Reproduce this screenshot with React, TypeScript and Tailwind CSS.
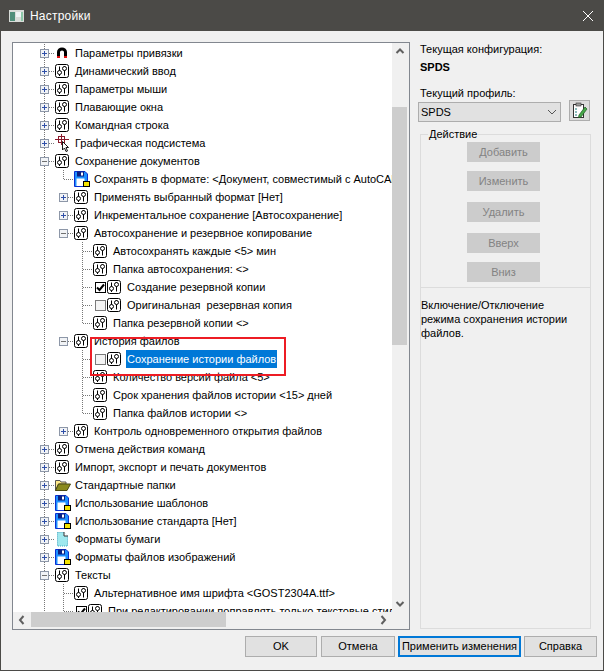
import React from "react";

type Cell = "v" | "n" | "t" | "e" | "p" | "m" | "q" | "r";
type Icon = "set" | "mag" | "cross" | "flop" | "fold" | "doc";
type Row = { c: Cell[]; i: Icon; t: string; k?: 0 | 1; s?: boolean };

const rows: Row[] = [
  { c: ["p"], i: "mag", t: "Параметры привязки" },
  { c: ["p"], i: "set", t: "Динамический ввод" },
  { c: ["p"], i: "set", t: "Параметры мыши" },
  { c: ["p"], i: "set", t: "Плавающие окна" },
  { c: ["p"], i: "set", t: "Командная строка" },
  { c: ["p"], i: "cross", t: "Графическая подсистема" },
  { c: ["m"], i: "set", t: "Сохранение документов" },
  { c: ["v", "e"], i: "flop", t: "Сохранять в формате: <Документ, совместимый с AutoCAD 2013>" },
  { c: ["v", "q"], i: "set", t: "Применять выбранный формат [Нет]" },
  { c: ["v", "q"], i: "set", t: "Инкрементальное сохранение [Автосохранение]" },
  { c: ["v", "r"], i: "set", t: "Автосохранение и резервное копирование" },
  { c: ["v", "n", "t"], i: "set", t: "Автосохранять каждые <5> мин" },
  { c: ["v", "n", "t"], i: "set", t: "Папка автосохранения: <>" },
  { c: ["v", "n", "t"], i: "set", t: "Создание резервной копии", k: 1 },
  { c: ["v", "n", "t"], i: "set", t: "Оригинальная  резервная копия", k: 0 },
  { c: ["v", "n", "e"], i: "set", t: "Папка резервной копии <>" },
  { c: ["v", "r"], i: "set", t: "История файлов" },
  { c: ["v", "n", "t"], i: "set", t: "Сохранение истории файлов", k: 0, s: true },
  { c: ["v", "n", "t"], i: "set", t: "Количество версий файла <5>" },
  { c: ["v", "n", "t"], i: "set", t: "Срок хранения файлов истории <15> дней" },
  { c: ["v", "n", "e"], i: "set", t: "Папка файлов истории <>" },
  { c: ["v", "q"], i: "set", t: "Контроль одновременного открытия файлов" },
  { c: ["p"], i: "set", t: "Отмена действия команд" },
  { c: ["p"], i: "set", t: "Импорт, экспорт и печать документов" },
  { c: ["p"], i: "fold", t: "Стандартные папки" },
  { c: ["p"], i: "flop", t: "Использование шаблонов" },
  { c: ["p"], i: "flop", t: "Использование стандарта [Нет]" },
  { c: ["p"], i: "doc", t: "Форматы бумаги" },
  { c: ["p"], i: "flop", t: "Форматы файлов изображений" },
  { c: ["m"], i: "set", t: "Тексты" },
  { c: ["v", "t"], i: "set", t: "Альтернативное имя шрифта <GOST2304A.ttf>" },
  { c: ["v", "t"], i: "set", t: "При редактировании поправлять только текстовые стили", k: 1 },
];

const dot = { stroke: "#777", strokeWidth: 1, strokeDasharray: "1 1", fill: "none" };

function TreeCell({ c }: { c: Cell }) {
  const hasV = c === "v" || c === "p" || c === "m" || c === "t";
  const hasH = c === "t" || c === "e";
  const box = c === "p" || c === "m" || c === "q" || c === "r";
  const plus = c === "p" || c === "q";
  return (
    <svg width="19" height="18" viewBox="0 0 19 18" className="shrink-0 block">
      {hasV && <path d="M9.5 0V18" {...dot} />}
      {c === "e" && <path d="M9.5 0V9.5" {...dot} />}
      {hasH && <path d="M10 9.5H20" {...dot} />}
      {box && (
        <g>
          <path d="M14 9.5H20" {...dot} />
          <rect x="5.5" y="5.5" width="8" height="8" fill="#f1f3f6" stroke="#8d97a8" />
          <path d={plus ? "M7 9.5H12M9.5 7V12" : "M7 9.5H12"} stroke={plus ? "#2f4fa8" : "#707070"} strokeWidth="1" fill="none" />
        </g>
      )}
    </svg>
  );
}

function RowIcon({ i }: { i: Icon }) {
  if (i === "set")
    return (
      <svg width="14" height="14" viewBox="0 0 14 14" className="shrink-0">
        <rect x="0.5" y="0.5" width="13" height="13" rx="2" fill="#fff" stroke="#000" />
        <path d="M4.5 2.5V12M9.5 2V11.5" stroke="#000" fill="none" />
        <circle cx="4.5" cy="8.5" r="2" fill="#fff" stroke="#000" />
        <circle cx="9.5" cy="4.5" r="2" fill="#fff" stroke="#000" />
      </svg>
    );
  if (i === "mag")
    return (
      <svg width="14" height="14" viewBox="0 0 14 14" className="shrink-0">
        <path d="M2 11V6a5 4.500 0 0 1 10 0v5h-3V6a2 1.500 0 0 0-4 0v5z" fill="#000" />
        <rect x="2" y="10" width="3" height="2" fill="#e01010" />
        <rect x="9" y="10" width="3" height="2" fill="#e01010" />
      </svg>
    );
  if (i === "cross")
    return (
      <svg width="16" height="18" viewBox="0 0 16 18" className="shrink-0 mr-[-2px]">
        <path d="M0 5.500H14M6.500 0V11" stroke="#8b1a2b" fill="none" />
        <rect x="3.500" y="2.500" width="6" height="6" fill="none" stroke="#8b1a2b" />
        <path d="M7.500 7.500V16L9.500 14L11 17.500L12.500 17L11 13.500H13.500Z" fill="#fff" stroke="#000" strokeWidth="0.900" />
      </svg>
    );
  if (i === "flop")
    return (
      <svg width="16" height="16" viewBox="0 0 16 16" className="shrink-0 mr-[-2px]">
        <path d="M0.500 0.500H11L13.500 3V15.500H0.500Z" fill="#1e90ff" stroke="#0a2fd0" />
        <rect x="3" y="0.500" width="7" height="5" fill="#0a1f80" />
        <rect x="7" y="1.500" width="2" height="3" fill="#fff" />
        <rect x="2.500" y="7.500" width="8" height="7.500" fill="#fff" />
        <rect x="9.500" y="10.500" width="6" height="5" fill="#f5e400" stroke="#000" />
      </svg>
    );
  if (i === "fold")
    return (
      <svg width="16" height="14" viewBox="0 0 16 14" className="shrink-0 mr-[-2px]">
        <path d="M0.500 12.500V2.500H5L6 4H11V6H3.500L0.500 12.500Z" fill="#ffe98a" stroke="#555" />
        <path d="M0.500 12.500L3.500 6H15.500L12 12.500Z" fill="#8a8a1e" stroke="#4a4a10" />
      </svg>
    );
  return (
    <svg width="14" height="16" viewBox="0 0 14 16" className="shrink-0">
      <path d="M2.500 1.500H9L12.500 5V15H2.500Z" fill="#9ee8ee" stroke="#3aa6c0" strokeDasharray="1 1" />
      <path d="M9 1V5H13" fill="#fff" stroke="#333" />
    </svg>
  );
}

function Check({ on }: { on: boolean }) {
  return (
    <span className={"ml-[3px] mr-px w-[11px] h-[11px] shrink-0 flex items-center justify-center border " + (on ? "border-black bg-white" : "border-[#7a7a7a] bg-[#f4f4f4]")}>
      {on && (
        <svg width="9" height="9" viewBox="0 0 9 9">
          <path d="M1 4.500L3.500 7L8 1.500" stroke="#000" strokeWidth="2" fill="none" />
        </svg>
      )}
    </span>
  );
}

function TreeRow({ r }: { r: Row }) {
  return (
    <div className="flex items-center h-[18px] shrink-0">
      {r.c.map((c, n) => (
        <TreeCell key={n} c={c} />
      ))}
      {r.k !== undefined ? <Check on={r.k === 1} /> : <span className="w-px shrink-0" />}
      <RowIcon i={r.i} />
      <span className={"ml-[5px] pl-px pr-px h-[18px] leading-[18px] whitespace-pre shrink-0 " + (r.s ? "bg-[#0078d7] text-white" : "text-black")}>
        {r.t}
      </span>
    </div>
  );
}

function Arrow({ d }: { d: "u" | "d" | "l" | "r" }) {
  const p = { u: "M1.500 6L5 2.500L8.500 6", d: "M1.500 3L5 6.500L8.500 3", l: "M6.500 1L3 5L6.500 9", r: "M3.500 1L7 5L3.500 9" }[d];
  return (
    <svg width="10" height="10" viewBox="0 0 10 10" className="block">
      <path d={p} stroke="#606060" strokeWidth="2" fill="none" />
    </svg>
  );
}

function Disabled({ t, className }: { t: string; className: string }) {
  return (
    <div className={"w-[73px] h-[20px] ml-[46px] bg-[#cccccc] text-[#838383] flex items-center justify-center " + className}>{t}</div>
  );
}

function Btn({ t, w, primary }: { t: string; w: string; primary?: boolean }) {
  return (
    <div className={"h-[21px] bg-[#e1e1e1] flex items-center justify-center whitespace-nowrap text-black " + w + " " + (primary ? "border-2 border-[#0078d7]" : "border border-[#adadad]")}>{t}</div>
  );
}

export default function App() {
  return (
    <div
      className="w-[604px] h-[671px] flex flex-col bg-[#f0f0f0] border border-t-0 border-[#4b4a47] text-[11px] overflow-hidden relative"
      style={{ fontFamily: '"Liberation Sans", Arial, sans-serif' }}
    >
      <div className="h-[31px] shrink-0 bg-[#4b4a47] -mx-px flex items-center pl-[9px] pr-[9px] text-white">
        <svg width="15" height="12" viewBox="0 0 15 12" className="shrink-0">
          <rect width="15" height="12" fill="#d8dcd8" />
          <rect x="1" y="2" width="5" height="9" fill="#4f8f7a" />
          <rect x="7" y="2" width="5" height="5" fill="#eef4f4" />
          <rect x="12" y="2" width="2" height="9" fill="#8cc8a8" />
        </svg>
        <span className="ml-[6px] text-[12px] tracking-[0.2px] flex-1">Настройки</span>
        <svg width="12" height="12" viewBox="0 0 12 12" className="mr-px">
          <path d="M1 1L11 11M11 1L1 11" stroke="#fff" strokeWidth="1" fill="none" />
        </svg>
      </div>

      <div className="flex pt-[10px] pl-[11px]">
        <div className="mt-px w-[398px] h-[588px] shrink-0 border border-[#82878f] bg-white flex flex-col">
          <div className="flex flex-1 min-h-0">
            <div className="flex-1 min-w-0 overflow-hidden pl-[22px] pt-px flex flex-col">
              {rows.map((r, n) => (
                <TreeRow key={n} r={r} />
              ))}
            </div>
            <div className="w-[17px] shrink-0 bg-[#f0f0f0] flex flex-col items-start">
              <div className="h-[17px] w-[15px] flex items-center justify-center shrink-0"><Arrow d="u" /></div>
              <div className="mt-[47px] w-[15px] h-[238px] bg-[#cdcdcd] shrink-0" />
              <div className="flex-1" />
              <div className="h-[17px] w-[15px] flex items-center justify-center shrink-0"><Arrow d="d" /></div>
            </div>
          </div>
          <div className="h-[17px] shrink-0 flex bg-[#f0f0f0]">
            <div className="flex-1 flex items-start">
              <div className="w-[18px] h-[15px] flex items-center justify-center shrink-0"><Arrow d="l" /></div>
              <div className="h-[15px] w-[195px] bg-[#cdcdcd] shrink-0" />
              <div className="flex-1" />
              <div className="w-[18px] h-[15px] flex items-center justify-center shrink-0"><Arrow d="r" /></div>
            </div>
            <div className="w-[17px] shrink-0" />
          </div>
        </div>

        <div className="ml-[8px] w-[173px] shrink-0 flex flex-col text-black">
          <div className="ml-[2px] h-[16px] leading-[16px]">Текущая конфигурация:</div>
          <div className="ml-[2px] mt-[2px] h-[16px] leading-[16px] font-bold">SPDS</div>
          <div className="ml-[2px] mt-[10px] h-[16px] leading-[16px]">Текущий профиль:</div>
          <div className="flex items-start">
            <div className="mt-px w-[143px] h-[20px] bg-[#e1e1e1] border border-[#adadad] flex items-center pl-[2px] pr-[3px] justify-between">
              <span>SPDS</span>
              <svg width="10" height="10" viewBox="0 0 10 10"><path d="M1 3L5 7L9 3" stroke="#555" fill="none" /></svg>
            </div>
            <div className="ml-[8px] -mt-px w-[21px] h-[21px] bg-[#dcdcdc] border border-[#adadad] flex items-center justify-center">
              <svg width="17" height="17" viewBox="0 0 17 17">
                <rect x="2.500" y="2.500" width="10" height="13" fill="#fff" stroke="#333" />
                <rect x="5" y="1" width="5" height="3" fill="#9a9a9a" stroke="#333" strokeWidth="0.600" />
                <path d="M4 7h2M4 10h2M4 13h2" stroke="#1a7a7a" />
                <path d="M8 13L14 5L16 7L10 15L7.500 15.500Z" fill="#46a84a" stroke="#1e5a20" strokeWidth="0.700" />
              </svg>
            </div>
          </div>
          <fieldset className="ml-[2px] mt-[4px] w-[171px] h-[162px] border border-[#dcdcdc] shrink-0">
            <legend className="ml-[7px] px-px h-[16px] leading-[16px]">Действие</legend>
            <Disabled t="Добавить" className="mt-0" />
            <Disabled t="Изменить" className="mt-[9px]" />
            <Disabled t="Удалить" className="mt-[11px]" />
            <Disabled t="Вверх" className="mt-[11px]" />
            <Disabled t="Вниз" className="mt-[9px]" />
          </fieldset>
          <div className="ml-[2px] w-[171px] h-[341px] border border-t-0 border-[#dcdcdc] pt-[10px] leading-[14px]">
            Включение/Отключение
            <br />
            режима сохранения истории
            <br />
            файлов.
          </div>
        </div>
      </div>

      <div className="flex justify-end gap-[3px] pr-[6px] mt-[6px]">
        <Btn t="OK" w="w-[72px] mr-px" />
        <Btn t="Отмена" w="w-[74px]" />
        <Btn t="Применить изменения" w="w-[123px]" primary />
        <Btn t="Справка" w="w-[73px]" />
      </div>

      <div className="absolute left-[89px] top-[337px] w-[196px] h-[39px] border-2 border-[#ed1c24]" />
    </div>
  );
}
